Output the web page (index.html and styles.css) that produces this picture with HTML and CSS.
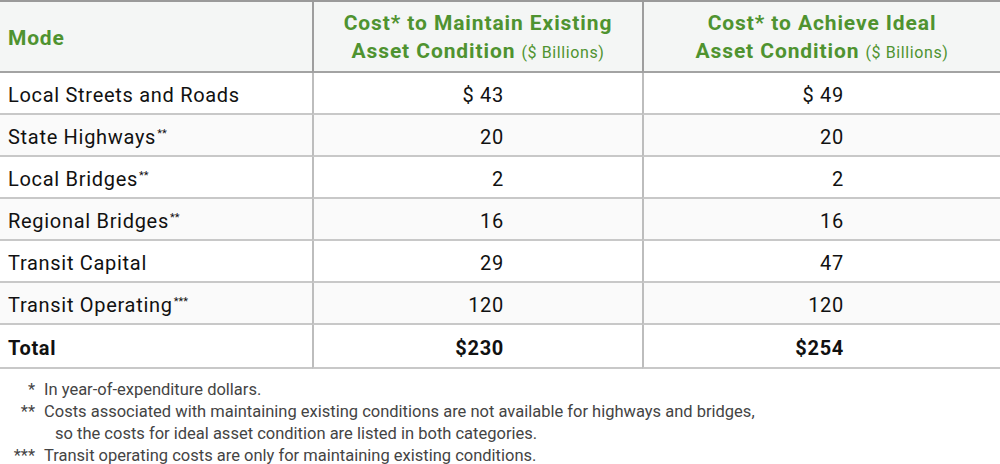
FILE: index.html
```html
<!DOCTYPE html>
<html lang="en">
<head>
<meta charset="utf-8">
<title>Cost to maintain and achieve asset condition</title>
<link rel="stylesheet" href="styles.css">
</head>
<body>
<div class="page">
  <table class="costs">
    <colgroup>
      <col class="c-mode">
      <col class="c-maintain">
      <col class="c-ideal">
    </colgroup>
    <thead>
      <tr>
        <th class="mode">Mode</th>
        <th class="cost">Cost* to Maintain Existing<br>Asset Condition <span class="unit">($ Billions)</span></th>
        <th class="cost">Cost* to Achieve Ideal<br>Asset Condition <span class="unit">($ Billions)</span></th>
      </tr>
    </thead>
    <tbody>
      <tr><td class="mode">Local Streets and Roads</td><td class="num n1">$ 43</td><td class="num n2">$ 49</td></tr>
      <tr class="alt"><td class="mode">State Highways<sup>**</sup></td><td class="num n1">20</td><td class="num n2">20</td></tr>
      <tr><td class="mode">Local Bridges<sup>**</sup></td><td class="num n1">2</td><td class="num n2">2</td></tr>
      <tr class="alt"><td class="mode">Regional Bridges<sup>**</sup></td><td class="num n1">16</td><td class="num n2">16</td></tr>
      <tr><td class="mode">Transit Capital</td><td class="num n1">29</td><td class="num n2">47</td></tr>
      <tr class="alt"><td class="mode">Transit Operating<sup>***</sup></td><td class="num n1">120</td><td class="num n2">120</td></tr>
      <tr class="total"><td class="mode">Total</td><td class="num n1">$230</td><td class="num n2">$254</td></tr>
    </tbody>
  </table>
  <div class="notes">
    <span class="mark">*</span><span class="text">In year-of-expenditure dollars.</span>
    <span class="mark">**</span><span class="text">Costs associated with maintaining existing conditions are not available for highways and bridges,<br><span class="cont">so the costs for ideal asset condition are listed in both categories.</span></span>
    <span class="mark">***</span><span class="text">Transit operating costs are only for maintaining existing conditions.</span>
  </div>
</div>
</body>
</html>
```

FILE: styles.css
```css
html, body {
  margin: 0;
  padding: 0;
  background: #ffffff;
}

body {
  font-family: Roboto, "Liberation Sans", sans-serif;
  color: #111111;
  width: 1000px;
  height: 464px;
  overflow: hidden;
}

.costs {
  width: 1000px;
  table-layout: fixed;
  border-collapse: separate;
  border-spacing: 0;
  border-top: 2px solid #9a9a9a;
}

.c-mode { width: 312px; }
.c-maintain { width: 330px; }
.c-ideal { width: 358px; }

th, td {
  box-sizing: border-box;
  padding: 0;
}

thead th {
  background: #f4f6f5;
  color: #4f9330;
  font-weight: 700;
  font-size: 21px;
  line-height: 28px;
  letter-spacing: 0.9px;
  height: 71px;
  border-bottom: 2px solid #a3a3a3;
  vertical-align: middle;
}

thead th.mode {
  text-align: left;
  padding-left: 8px;
  padding-top: 2px;
  letter-spacing: 0.8px;
}

thead th.cost {
  text-align: center;
  border-left: 2px solid #9e9e9e;
  padding-top: 2px;
}

.unit {
  font-weight: 400;
  font-size: 16px;
  letter-spacing: 0.6px;
}

tbody td {
  height: 42px;
  font-size: 20px;
  letter-spacing: 0.7px;
  border-bottom: 2px solid #c8c8c8;
  vertical-align: middle;
  padding-top: 3px;
}

tbody tr.alt td {
  background: #fafafa;
}

tbody td.mode {
  padding-left: 8px;
}

tbody td.num {
  border-left: 2px solid #bdbdbd;
  text-align: right;
}

td.n1 { padding-right: 138px; }
td.n2 { padding-right: 156px; }

tbody tr.total td {
  height: 44px;
  font-weight: 700;
}

sup {
  font-size: 11px;
  line-height: 0;
  vertical-align: 7px;
  margin-left: 1px;
  letter-spacing: 0;
}

.notes {
  display: grid;
  grid-template-columns: 35px 1fr;
  column-gap: 9px;
  margin-top: 10px;
  font-size: 16.5px;
  line-height: 22px;
  color: #444444;
}

.mark {
  text-align: right;
}

.cont {
  padding-left: 11px;
}
```
